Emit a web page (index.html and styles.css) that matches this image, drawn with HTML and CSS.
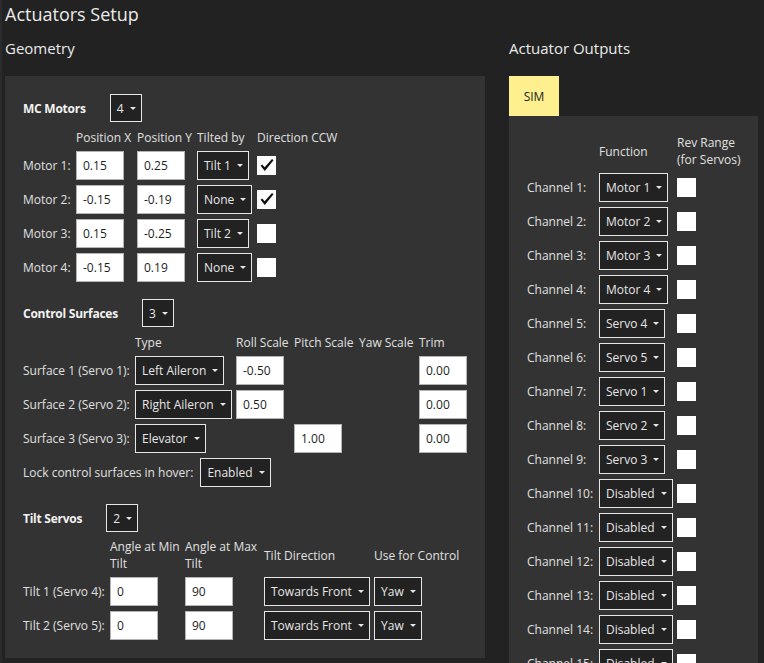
FILE: index.html
```html
<!DOCTYPE html>
<html lang="en">
<head>
<meta charset="utf-8">
<title>Actuators Setup</title>
<link rel="stylesheet" href="styles.css">
</head>
<body>
<div class="app">
  <h1 class="page-title">Actuators Setup</h1>
  <div class="columns">
    <section class="col-left">
      <h2 class="section-title">Geometry</h2>
      <div class="panel geometry">
        <div class="group-head">
          <span class="group-title">MC Motors</span>
          <div class="sel sel-head">4</div>
        </div>
        <div class="grid motors">
          <span class="hd"></span><span class="hd">Position X</span><span class="hd">Position Y</span><span class="hd">Tilted by</span><span class="hd">Direction CCW</span>

          <span class="lbl">Motor 1:</span><input class="num" value="0.15" readonly><input class="num" value="0.25" readonly><div class="sel">Tilt 1</div>
          <span class="chk"><svg viewBox="0 0 19 19" width="19" height="19"><path d="M3.6 9.8 L5.2 8.5 L7.6 11.3 L15 3 L16.5 4.3 L7.8 15 Z" fill="#111"/></svg></span>

          <span class="lbl">Motor 2:</span><input class="num" value="-0.15" readonly><input class="num" value="-0.19" readonly><div class="sel">None</div>
          <span class="chk"><svg viewBox="0 0 19 19" width="19" height="19"><path d="M3.6 9.8 L5.2 8.5 L7.6 11.3 L15 3 L16.5 4.3 L7.8 15 Z" fill="#111"/></svg></span>

          <span class="lbl">Motor 3:</span><input class="num" value="0.15" readonly><input class="num" value="-0.25" readonly><div class="sel">Tilt 2</div><span class="chk"></span>

          <span class="lbl">Motor 4:</span><input class="num" value="-0.15" readonly><input class="num" value="0.19" readonly><div class="sel">None</div><span class="chk"></span>
        </div>

        <div class="group-head spaced">
          <span class="group-title">Control Surfaces</span>
          <div class="sel sel-head">3</div>
        </div>
        <div class="grid surfaces">
          <span class="hd"></span><span class="hd">Type</span><span class="hd">Roll Scale</span><span class="hd">Pitch Scale</span><span class="hd">Yaw Scale</span><span class="hd">Trim</span>

          <span class="lbl">Surface 1 (Servo 1):</span><div class="sel">Left Aileron</div><input class="num" value="-0.50" readonly><span></span><span></span><input class="num" value="0.00" readonly>

          <span class="lbl">Surface 2 (Servo 2):</span><div class="sel">Right Aileron</div><input class="num" value="0.50" readonly><span></span><span></span><input class="num" value="0.00" readonly>

          <span class="lbl">Surface 3 (Servo 3):</span><div class="sel">Elevator</div><span></span><input class="num" value="1.00" readonly><span></span><input class="num" value="0.00" readonly>
        </div>
        <div class="lock-row">
          <span class="lbl">Lock control surfaces in hover:</span>
          <div class="sel">Enabled</div>
        </div>

        <div class="group-head spaced">
          <span class="group-title">Tilt Servos</span>
          <div class="sel sel-head">2</div>
        </div>
        <div class="grid tilts">
          <span class="hd"></span><span class="hd">Angle at Min<br>Tilt</span><span class="hd">Angle at Max<br>Tilt</span><span class="hd">Tilt Direction</span><span class="hd">Use for Control</span>

          <span class="lbl">Tilt 1 (Servo 4):</span><input class="num" value="0" readonly><input class="num" value="90" readonly><div class="sel">Towards Front</div><div class="sel">Yaw</div>

          <span class="lbl">Tilt 2 (Servo 5):</span><input class="num" value="0" readonly><input class="num" value="90" readonly><div class="sel">Towards Front</div><div class="sel">Yaw</div>
        </div>
      </div>
    </section>

    <section class="col-right">
      <h2 class="section-title">Actuator Outputs</h2>
      <div class="tabs"><div class="tab active">SIM</div></div>
      <div class="panel outputs">
        <div class="grid channels">
          <span class="hd"></span><span class="hd">Function</span><span class="hd">Rev Range<br>(for Servos)</span>

          <span class="lbl">Channel 1:</span><div class="sel">Motor 1</div><span class="chk"></span>
          <span class="lbl">Channel 2:</span><div class="sel">Motor 2</div><span class="chk"></span>
          <span class="lbl">Channel 3:</span><div class="sel">Motor 3</div><span class="chk"></span>
          <span class="lbl">Channel 4:</span><div class="sel">Motor 4</div><span class="chk"></span>
          <span class="lbl">Channel 5:</span><div class="sel">Servo 4</div><span class="chk"></span>
          <span class="lbl">Channel 6:</span><div class="sel">Servo 5</div><span class="chk"></span>
          <span class="lbl">Channel 7:</span><div class="sel">Servo 1</div><span class="chk"></span>
          <span class="lbl">Channel 8:</span><div class="sel">Servo 2</div><span class="chk"></span>
          <span class="lbl">Channel 9:</span><div class="sel">Servo 3</div><span class="chk"></span>
          <span class="lbl">Channel 10:</span><div class="sel">Disabled</div><span class="chk"></span>
          <span class="lbl">Channel 11:</span><div class="sel">Disabled</div><span class="chk"></span>
          <span class="lbl">Channel 12:</span><div class="sel">Disabled</div><span class="chk"></span>
          <span class="lbl">Channel 13:</span><div class="sel">Disabled</div><span class="chk"></span>
          <span class="lbl">Channel 14:</span><div class="sel">Disabled</div><span class="chk"></span>
          <span class="lbl">Channel 15:</span><div class="sel">Disabled</div><span class="chk"></span>
        </div>
      </div>
    </section>
  </div>
</div>
</body>
</html>
```
FILE: styles.css
```css
* { box-sizing: border-box; }

html, body {
  margin: 0;
  height: 100%;
  overflow: hidden;
  background: #222222;
}

body {
  font-family: "Open Sans", "Noto Sans", sans-serif;
  font-size: 12px;
  line-height: 17px;
  color: #e0e0e0;
}

.app {
  height: 100%;
  border-left: 2px solid #2b2b2b;
  padding-left: 3px;
}

.page-title {
  margin: 0;
  font-size: 18px;
  line-height: 29px;
  font-weight: 400;
  color: #ebebeb;
}

.columns {
  display: flex;
  gap: 24px;
  align-items: flex-start;
}

.col-left { width: 480px; }
.col-right { width: 249px; }

.section-title {
  margin: 0 0 9px;
  font-size: 15px;
  line-height: 38px;
  font-weight: 400;
  color: #ebebeb;
}

.panel {
  background: #333333;
  padding: 18px 18px 16px;
}

.outputs {
  padding: 12px 18px;
  height: 620px;
}

.tabs { display: flex; }

.tab {
  width: 50px;
  height: 40px;
  display: flex;
  align-items: center;
  justify-content: center;
  color: #222;
}

.tab.active { background: #fef08f; }

.group-head {
  display: flex;
  align-items: center;
  gap: 24px;
  height: 28px;
}

.group-head.spaced { margin-top: 15px; }

.group-title {
  font-weight: 700;
  letter-spacing: -0.25px;
  color: #f2f2f2;
}

.grid {
  display: grid;
  grid-template-rows: auto;
  grid-auto-rows: 34px;
  align-items: center;
}

.grid .hd {
  align-self: stretch;
  display: flex;
  align-items: center;
  padding: 6px 0 2px;
  min-height: 26px;
  white-space: nowrap;
}

.motors { grid-template-columns: 53px 61px 60px 60px auto; }
.surfaces { grid-template-columns: 112px 101px 58px 65px 60px auto; }
.tilts { grid-template-columns: 87px 75px 79px 110px auto; }
.channels { grid-template-columns: 72px 78px auto; }

.lbl { white-space: nowrap; }

.num {
  display: block;
  width: 48px;
  height: 29px;
  margin: 0;
  padding: 0 6px;
  border: 1px solid #b4b4b4;
  border-radius: 0;
  background: #ffffff;
  color: #1e1e1e;
  font: inherit;
  outline: none;
}

.sel {
  display: inline-flex;
  align-items: center;
  justify-self: start;
  gap: 6px;
  height: 29px;
  padding: 0 5px 0 6px;
  border: 1px solid #e6e6e6;
  background: #222222;
  color: #e6e6e6;
  white-space: nowrap;
}

.sel::after {
  content: "";
  width: 0;
  height: 0;
  border-left: 3px solid transparent;
  border-right: 3px solid transparent;
  border-top: 3px solid #e6e6e6;
}

.sel-head { height: 28px; }

.chk {
  display: block;
  justify-self: start;
  width: 19px;
  height: 19px;
  background: #ffffff;
}

.chk svg { display: block; }

.lock-row {
  display: flex;
  align-items: center;
  gap: 7px;
  height: 34px;
}
```
